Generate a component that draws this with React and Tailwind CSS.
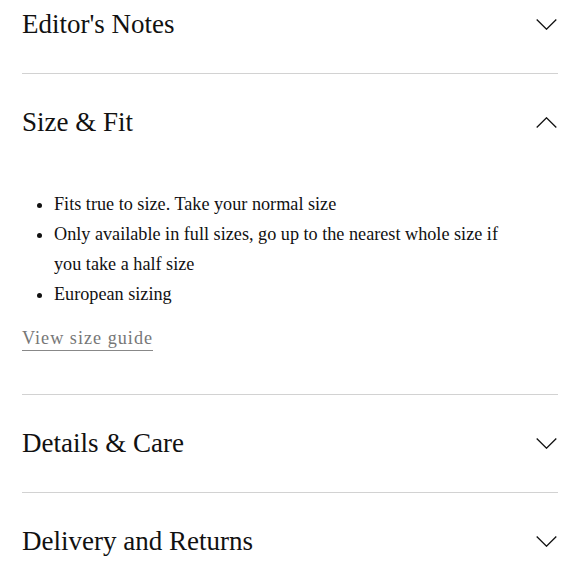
import React, { useState } from "react";

const Chevron = ({ up }) => (
  <svg width="21" height="11" viewBox="0 0 21 11" fill="none" className="shrink-0 mr-[1px]">
    <path
      d={up ? "M0.7 10.5L10.5 0.8L20.3 10.5" : "M0.7 0.5L10.5 10.2L20.3 0.5"}
      stroke="#111"
      strokeWidth="1.3"
    />
  </svg>
);

const sections = [
  { title: "Editor's Notes" },
  { title: "Size & Fit" },
  { title: "Details & Care" },
  { title: "Delivery and Returns" },
];

export default function App() {
  const [openIdx, setOpenIdx] = useState(1);

  return (
    <div
      className="bg-white min-h-screen overflow-hidden text-[#111]"
      style={{ fontFamily: "Georgia, 'Liberation Serif', serif" }}
    >
      <div className="-mt-[24px] px-[22px]">
        {sections.map((s, i) => (
          <div key={s.title} className="border-b border-[#d2d2d2] last:border-b-0">
            <button
              onClick={() => setOpenIdx(openIdx === i ? -1 : i)}
              className="w-full h-[97px] flex items-center justify-between text-left"
            >
              <span className="text-[27px]">{s.title}</span>
              <Chevron up={openIdx === i} />
            </button>

            {openIdx === i && (
              <div className="pt-[18px] pb-[43px]">
                <ul className="list-disc pl-[32px] pr-[53px] text-[18.2px] leading-[30px]">
                  <li>Fits true to size. Take your normal size</li>
                  <li>Only available in full sizes, go up to the nearest whole size if you take a half size</li>
                  <li>European sizing</li>
                </ul>
                <a
                  href="#"
                  className="inline-block mt-[17px] text-[18.2px] leading-[24px] tracking-[1px] text-[#777] border-b border-[#888]"
                >
                  View size guide
                </a>
              </div>
            )}
          </div>
        ))}
      </div>
    </div>
  );
}
